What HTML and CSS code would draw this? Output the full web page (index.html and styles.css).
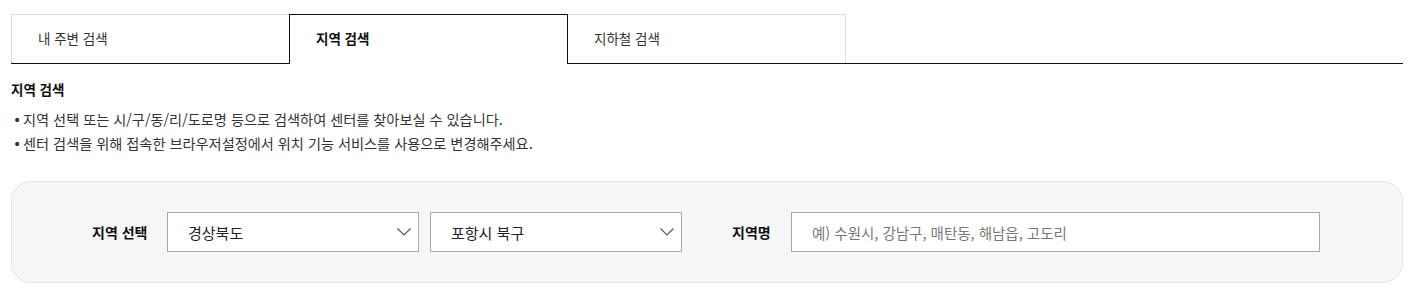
FILE: index.html
```html
<!DOCTYPE html>
<html lang="ko">
<head>
<meta charset="utf-8">
<link rel="stylesheet" href="styles.css">
</head>
<body>
<div class="wrap">
  <ul class="tabs">
    <li class="tab">내 주변 검색</li>
    <li class="tab active">지역 검색</li>
    <li class="tab">지하철 검색</li>
  </ul>
  <h3 class="title">지역 검색</h3>
  <ul class="notes">
    <li>지역 선택 또는 시/구/동/리/도로명 등으로 검색하여 센터를 찾아보실 수 있습니다.</li>
    <li>센터 검색을 위해 접속한 브라우저설정에서 위치 기능 서비스를 사용으로 변경해주세요.</li>
  </ul>
  <div class="panel">
    <span class="label label-region">지역 선택</span>
    <div class="select">
      <span>경상북도</span>
      <svg class="chev" width="14" height="8" viewBox="0 0 14 8"><polyline points="0.5,0.5 7,7 13.5,0.5" fill="none" stroke="#555" stroke-width="1.1"/></svg>
    </div>
    <div class="select select-2">
      <span>포항시 북구</span>
      <svg class="chev" width="14" height="8" viewBox="0 0 14 8"><polyline points="0.5,0.5 7,7 13.5,0.5" fill="none" stroke="#555" stroke-width="1.1"/></svg>
    </div>
    <span class="label label-name">지역명</span>
    <div class="input"><span class="ph">예) 수원시, 강남구, 매탄동, 해남읍, 고도리</span></div>
  </div>
</div>
</body>
</html>
```
FILE: styles.css
```css
* { box-sizing: border-box; }
body {
  margin: 0;
  background: #fff;
  font-family: "Noto Sans CJK KR", "Noto Sans", sans-serif;
  color: #222;
  font-size: 14px;
}
.wrap {
  width: 1392px;
  margin-left: 11px;
  padding-top: 14px;
}
.tabs {
  list-style: none;
  margin: 0;
  padding: 0;
  display: flex;
  border-bottom: 1px solid #111;
  height: 50px;
}
.tab {
  width: 279px;
  height: 49px;
  border: 1px solid #ddd;
  border-bottom: none;
  margin-right: -1px;
  padding-left: 26px;
  padding-bottom: 2px;
  display: flex;
  align-items: center;
  font-size: 13.5px;
  color: #333;
  background: #fff;
}
.tab.active {
  border-color: #111;
  height: 50px;
  padding-bottom: 3px;
  font-weight: bold;
  color: #111;
  position: relative;
  z-index: 1;
}
.title {
  margin: 15px 0 0;
  font-size: 13.5px;
  font-weight: bold;
  color: #111;
  line-height: 20px;
}
.notes {
  list-style: none;
  margin: 8px 0 0;
  padding: 0;
}
.notes li {
  position: relative;
  padding-left: 12px;
  line-height: 24px;
  font-size: 14.2px;
  color: #333;
}
.notes li::before {
  content: "•";
  position: absolute;
  left: 2px;
  top: 1px;
  font-family: "DejaVu Sans", sans-serif;
  font-size: 14px;
  color: #333;
}
.panel {
  margin-top: 26px;
  height: 102px;
  background: #f6f6f6;
  border: 1px solid #e3e3e3;
  border-radius: 20px;
  display: flex;
  align-items: center;
  padding-left: 80px;
}
.label {
  font-size: 14px;
  font-weight: bold;
  color: #111;
  white-space: nowrap;
  flex-shrink: 0;
}
.label-region { width: 55px; margin-right: 20px; }
.label-name { width: 39px; margin-left: 50px; margin-right: 20px; }
.select {
  flex-shrink: 0;
  width: 252px;
  height: 40px;
  background: #fff;
  border: 1px solid #aaa;
  display: flex;
  align-items: center;
  justify-content: space-between;
  padding: 0 7px 0 20px;
  font-size: 15px;
  color: #222;
}
.select-2 { margin-left: 11px; }
.chev { display: block; }
.input {
  flex-shrink: 0;
  width: 529px;
  height: 40px;
  background: #fff;
  border: 1px solid #aaa;
  display: flex;
  align-items: center;
  padding-left: 20px;
}
.ph {
  color: #777;
  font-size: 14.5px;
}
```
